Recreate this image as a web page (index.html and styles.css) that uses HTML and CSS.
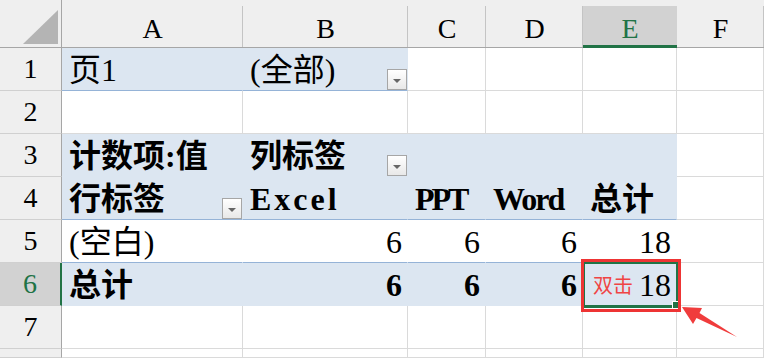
FILE: index.html
```html
<!DOCTYPE html>
<html lang="en">
<head>
    <meta charset="UTF-8">
    <title>数据透视表</title>
    <link rel="stylesheet" href="styles.css">
</head>
<body>

<div class="sheet">
    <!-- column headers -->
    <div class="corner"><span class="tri"></span></div>
    <div class="ch">A</div>
    <div class="ch">B</div>
    <div class="ch">C</div>
    <div class="ch">D</div>
    <div class="ch sel">E</div>
    <div class="ch">F</div>

    <!-- row 1: page filter -->
    <div class="rh">1</div>
    <div class="c pv line">页1</div>
    <div class="c pv line">(全部)<span class="dd"></span></div>
    <div class="c"></div>
    <div class="c"></div>
    <div class="c"></div>
    <div class="c"></div>

    <!-- row 2 -->
    <div class="rh">2</div>
    <div class="c"></div>
    <div class="c"></div>
    <div class="c"></div>
    <div class="c"></div>
    <div class="c"></div>
    <div class="c"></div>

    <!-- row 3 -->
    <div class="rh">3</div>
    <div class="c pv b">计数项:值</div>
    <div class="c pv b">列标签<span class="dd"></span></div>
    <div class="c pv"></div>
    <div class="c pv"></div>
    <div class="c pv"></div>
    <div class="c"></div>

    <!-- row 4 -->
    <div class="rh">4</div>
    <div class="c pv b line">行标签<span class="dd"></span></div>
    <div class="c pv b line"><span class="wide">Excel</span></div>
    <div class="c pv b line"><span class="tight">PPT</span></div>
    <div class="c pv b line"><span class="snug">Word</span></div>
    <div class="c pv b line">总计</div>
    <div class="c"></div>

    <!-- row 5 -->
    <div class="rh">5</div>
    <div class="c pw line">(空白)</div>
    <div class="c pw line num">6</div>
    <div class="c pw line num">6</div>
    <div class="c pw line num">6</div>
    <div class="c pw line num">18</div>
    <div class="c"></div>

    <!-- row 6: grand total -->
    <div class="rh sel">6</div>
    <div class="c pv b">总计</div>
    <div class="c pv b num">6</div>
    <div class="c pv b num">6</div>
    <div class="c pv b num">6</div>
    <div class="c pv num">18</div>
    <div class="c"></div>

    <!-- row 7 -->
    <div class="rh">7</div>
    <div class="c"></div>
    <div class="c"></div>
    <div class="c"></div>
    <div class="c"></div>
    <div class="c"></div>
    <div class="c"></div>

    <!-- row 8 (cut off) -->
    <div class="rh"></div>
    <div class="c"></div>
    <div class="c"></div>
    <div class="c"></div>
    <div class="c"></div>
    <div class="c"></div>
    <div class="c"></div>

    <!-- active cell E6 -->
    <div class="cursor"><span class="handle"></span></div>

    <!-- callout -->
    <div class="callout">双击</div>
    <svg class="arrow" width="764" height="358" viewBox="0 0 764 358">
        <polygon points="682,307 702,308 699.5,313 737,337 696.5,318 693,324" fill="#f03c3c"/>
    </svg>
</div>

</body>
</html>
```

FILE: styles.css
```css
/* Page */
body {
    margin: 0;
    overflow: hidden;
    background: #fff;
}

/* Worksheet grid */
.sheet {
    position: relative;
    display: grid;
    grid-template-columns: 62px 181px 165px 78px 97px 94px 1fr;
    grid-template-rows: 48px repeat(7, 43px) 1fr;
    width: 764px;
    height: 358px;
    font-family: "Liberation Serif", "Noto Sans CJK SC", serif;
    color: #000;
}

/* Header corner with the select-all triangle */
.corner {
    background: #efefef;
    border-right: 1px solid #a6a6a6;
    border-bottom: 1px solid #a6a6a6;
    position: relative;
}

.tri {
    position: absolute;
    left: 23px;
    top: 10px;
    width: 35px;
    height: 34px;
    background: #b4b4b4;
    clip-path: polygon(0 100%, 100% 100%, 100% 0);
}

/* Column headers */
.ch {
    background-color: #efefef;
    background-image: linear-gradient(#c4c4c4, #c4c4c4);
    background-size: 1px calc(100% - 6px);
    background-position: right bottom;
    background-repeat: no-repeat;
    border-bottom: 1px solid #a6a6a6;
    font-size: 28px;
    display: flex;
    align-items: center;
    justify-content: center;
    padding-top: 10px;
}

.ch.sel {
    background: linear-gradient(#d2d2d2, #d2d2d2) right bottom / 100% calc(100% - 6px) no-repeat, #efefef;
    border-bottom: 3px solid #217346;
    color: #217346;
    padding-top: 12px;
}

/* Row headers */
.rh {
    background: #efefef;
    border-right: 1px solid #a6a6a6;
    border-bottom: 1px solid #d0d0d0;
    font-size: 28px;
    display: flex;
    align-items: center;
    justify-content: center;
}

.rh.sel {
    background: #d2d2d2;
    border-right: 2px solid #217346;
    color: #217346;
}

/* Cells */
.c {
    background: #fff;
    border-right: 1px solid #dadada;
    border-bottom: 1px solid #dadada;
    font-size: 32px;
    line-height: 36px;
    white-space: nowrap;
    overflow: hidden;
    display: flex;
    align-items: center;
    padding: 2px 7px 0;
}

.num {
    justify-content: flex-end;
    padding-right: 5px;
}

.b {
    font-weight: bold;
}

/* Pivot table area */
.pv {
    background: #dce6f1;
    border-right-color: transparent;
    border-bottom-color: transparent;
}

.pw {
    border-right-color: transparent;
}

.pv.line,
.pw.line {
    border-bottom-color: #95b3d7;
}

.wide {
    letter-spacing: 3px;
}

.tight {
    letter-spacing: -3px;
}

.snug {
    letter-spacing: -2px;
}

/* Filter drop-down button */
.dd {
    margin-left: auto;
    margin-right: -7px;
    align-self: flex-end;
    flex: none;
    width: 20px;
    height: 21px;
    box-sizing: border-box;
    border: 1px solid #a6a6a6;
    background: linear-gradient(#fff, #e8e8e8);
    display: flex;
    align-items: center;
    justify-content: center;
    padding-top: 3px;
}

.dd::after {
    content: "";
    border-left: 4px solid transparent;
    border-right: 4px solid transparent;
    border-top: 4px solid #666;
}

/* Active cell outline and fill handle */
.cursor {
    position: absolute;
    left: 583px;
    top: 262px;
    width: 95px;
    height: 46px;
    box-sizing: border-box;
    border: 2px solid #217346;
    border-bottom-width: 3px;
}

.handle {
    position: absolute;
    right: -4px;
    bottom: -4px;
    width: 6px;
    height: 6px;
    background: #217346;
    border: 1px solid #fff;
}

/* Red annotation */
.callout {
    position: absolute;
    left: 581px;
    top: 259px;
    width: 100px;
    height: 53px;
    box-sizing: border-box;
    border: 3px solid #ee3434;
    color: #f04444;
    font-family: "Noto Sans CJK SC", sans-serif;
    font-size: 20px;
    display: flex;
    align-items: center;
    padding-left: 9px;
    padding-bottom: 2px;
}

.arrow {
    position: absolute;
    left: 0;
    top: 0;
    pointer-events: none;
}
```
